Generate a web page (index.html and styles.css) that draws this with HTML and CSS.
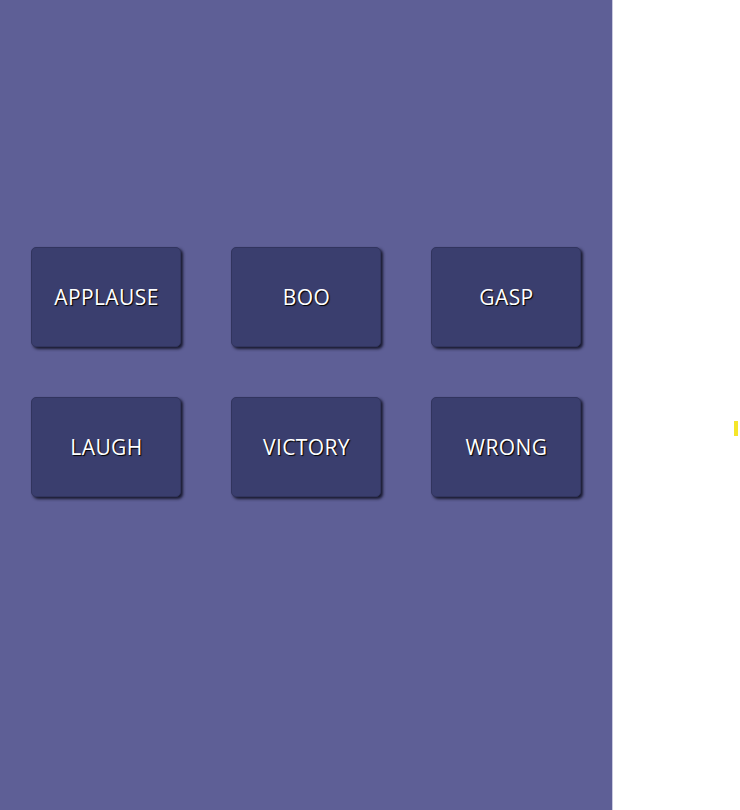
FILE: index.html
```html
<!DOCTYPE html>
<html>
<head>
<meta charset="utf-8">
<link rel="stylesheet" href="styles.css">
</head>
<body>
<div class="page">
  <main class="panel">
    <div class="grid">
      <button class="btn">APPLAUSE</button>
      <button class="btn">BOO</button>
      <button class="btn">GASP</button>
      <button class="btn">LAUGH</button>
      <button class="btn">VICTORY</button>
      <button class="btn">WRONG</button>
    </div>
  </main>
  <aside class="side">
    <span class="mark"></span>
  </aside>
</div>
</body>
</html>
```
FILE: styles.css
```css
html, body {
  margin: 0;
  padding: 0;
  height: 100%;
  background: #ffffff;
}
.page {
  display: flex;
  height: 810px;
}
.panel {
  width: 613px;
  flex: none;
  background: #5e5f96;
  border-right: 1px solid #c9cae0;
  box-sizing: border-box;
  padding: 247px 31px 0 31px;
}
.grid {
  display: grid;
  grid-template-columns: repeat(3, 150px);
  grid-auto-rows: 100px;
  column-gap: 50px;
  row-gap: 50px;
}
.btn {
  box-sizing: border-box;
  width: 150px;
  height: 100px;
  margin: 0;
  padding: 0 0 0 1px;
  background: #3a3e6e;
  border: 1px solid #31345e;
  border-radius: 5px;
  box-shadow: 2px 2px 3px #18192e;
  color: #ffffff;
  font-family: "Open Sans", sans-serif;
  font-size: 21px;
  font-weight: 400;
  letter-spacing: 0.4px;
  text-shadow: 1px 1px 1px #000000;
}
.side {
  flex: 1;
  position: relative;
}
.mark {
  position: absolute;
  left: 121px;
  top: 421px;
  width: 4px;
  height: 15px;
  background: #f5e62a;
}
```
